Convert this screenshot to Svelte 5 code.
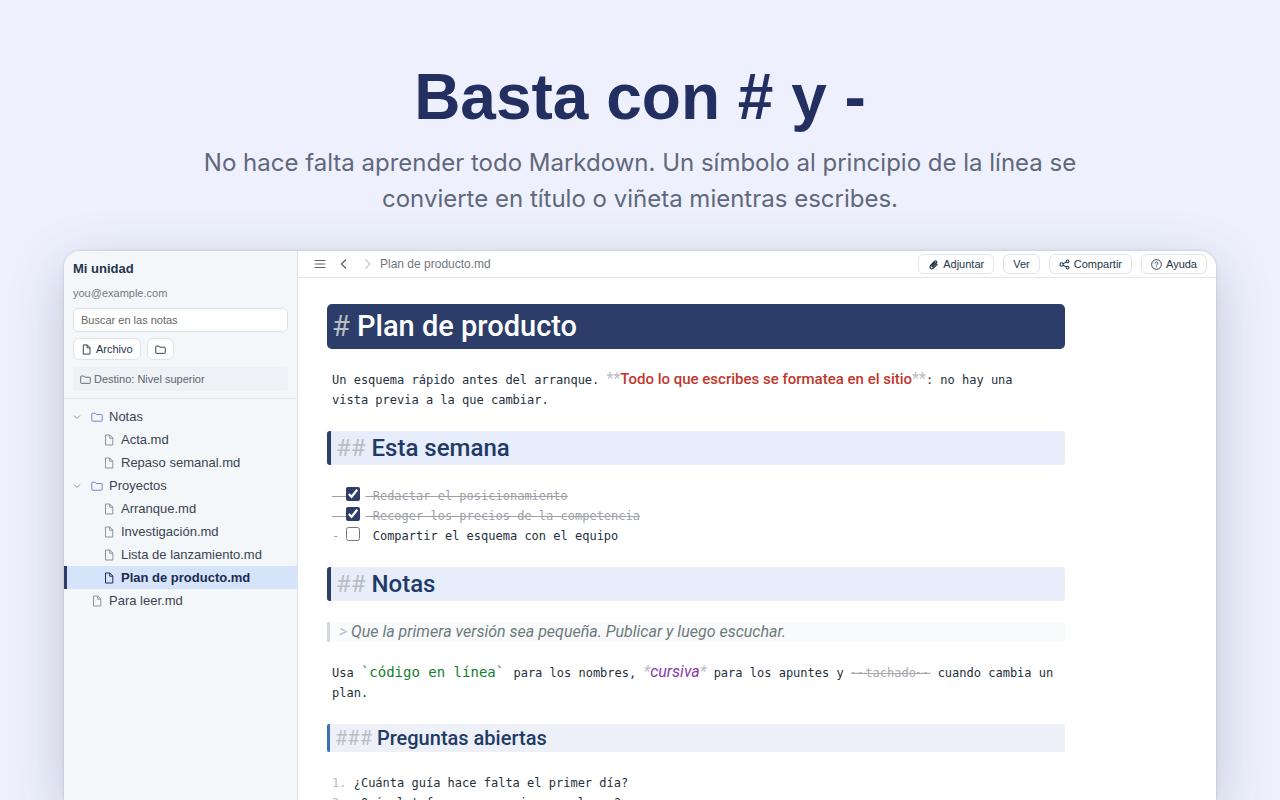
<script lang="ts">
  interface TreeItem {
    name: string;
    kind: "folder" | "file";
    depth: number;
  }

  const tree: TreeItem[] = [
    { name: "Notas", kind: "folder", depth: 0 },
    { name: "Acta.md", kind: "file", depth: 1 },
    { name: "Repaso semanal.md", kind: "file", depth: 1 },
    { name: "Proyectos", kind: "folder", depth: 0 },
    { name: "Arranque.md", kind: "file", depth: 1 },
    { name: "Investigación.md", kind: "file", depth: 1 },
    { name: "Lista de lanzamiento.md", kind: "file", depth: 1 },
    { name: "Plan de producto.md", kind: "file", depth: 1 },
    { name: "Para leer.md", kind: "file", depth: 0 },
  ];

  let current = $state("Plan de producto.md");
  let query = $state("");

  let tasks = $state([
    { text: "Redactar el posicionamiento", done: true },
    { text: "Recoger los precios de la competencia", done: true },
    { text: "Compartir el esquema con el equipo", done: false },
  ]);

  const questions = [
    "¿Cuánta guía hace falta el primer día?",
    "¿Qué plataformas van primero y luego?",
  ];
</script>

{#snippet fileIcon()}
  <svg class="icon file" viewBox="0 0 12 12" fill="none" stroke="currentColor" stroke-linejoin="round">
    <path d="M2.5 1h4.3L9.8 4v7H2.5z" />
    <path d="M6.7 1v3.2h3.1" />
  </svg>
{/snippet}

{#snippet folderIcon()}
  <svg class="icon folder" viewBox="0 0 12 12" fill="none" stroke="currentColor" stroke-linejoin="round">
    <path d="M.8 9.6V2.8q0-.6.6-.6h2.7l1.1 1.3h5.4q.6 0 .6.6v5.500q0 .6-.6.6H1.400q-.6 0-.6-.6z" />
  </svg>
{/snippet}

<main class="page">
  <header class="hero">
    <h1>Basta con # y -</h1>
    <p>
      No hace falta aprender todo Markdown. Un símbolo al principio de la línea se
      convierte en título o viñeta mientras escribes.
    </p>
  </header>

  <div class="window">
    <aside class="sidebar">
      <div class="drive">
        <h2>Mi unidad</h2>
        <div class="account">you@example.com</div>
        <input
          class="search"
          type="search"
          aria-label="Buscar en las notas"
          placeholder="Buscar en las notas"
          bind:value={query}
        />
        <div class="create">
          <button class="btn">{@render fileIcon()}Archivo</button>
          <button class="btn" aria-label="Carpeta">{@render folderIcon()}</button>
        </div>
        <div class="target">{@render folderIcon()}Destino: Nivel superior</div>
      </div>

      <nav class="tree">
        {#each tree as item}
          <button
            class="row"
            class:nested={item.depth === 1}
            class:loose={item.kind === "file" && item.depth === 0}
            class:is-folder={item.kind === "folder"}
            class:active={item.name === current}
            onclick={() => item.kind === "file" && (current = item.name)}
          >
            {#if item.kind === "folder"}
              <svg class="caret" viewBox="0 0 8 8" fill="none" stroke="currentColor">
                <path d="M1 2.5l3 3 3-3" />
              </svg>
              {@render folderIcon()}
            {:else}
              {@render fileIcon()}
            {/if}
            <span>{item.name}</span>
          </button>
        {/each}
      </nav>
    </aside>

    <section class="main">
      <div class="toolbar">
        <div class="tools">
          <button class="tool" aria-label="Menú">
            <svg viewBox="0 0 12 12" fill="none" stroke="currentColor" stroke-width="1.2">
              <path d="M.5 2.5h11M.5 6h11M.5 9.5h11" />
            </svg>
          </button>
          <button class="tool" aria-label="Atrás">
            <svg viewBox="0 0 12 12" fill="none" stroke="currentColor" stroke-width="1.3">
              <path d="M8 1.500L3.500 6 8 10.500" />
            </svg>
          </button>
          <button class="tool" aria-label="Adelante" disabled>
            <svg viewBox="0 0 12 12" fill="none" stroke="currentColor" stroke-width="1.2">
              <path d="M3.500 1.500L8 6l-4.500 4.500" />
            </svg>
          </button>
        </div>
        <span class="crumb">{current}</span>

        <div class="actions">
          <button class="btn">
            <svg class="icon" viewBox="0 0 12 12" fill="none" stroke="currentColor" stroke-width="1.3" stroke-linecap="round">
              <path d="M10 5.8L6.3 9.7c-1.3 1.4-3.2 1.2-3.9 0-.6-1-.2-2 .6-2.900l4-4.200c1.500-1.500 3.500.2 2.200 1.800L5.600 8.200c-.8.8-1.900-.1-1.200-1L7.600 3.800" />
            </svg>
            Adjuntar
          </button>
          <button class="btn">Ver</button>
          <button class="btn">
            <svg class="icon" viewBox="0 0 12 12" fill="none" stroke="currentColor" stroke-width="1.1">
              <circle cx="2.8" cy="6" r="1.8" />
              <circle cx="9.3" cy="2.7" r="1.5" />
              <circle cx="9.3" cy="9.3" r="1.5" />
              <path d="M4.4 5.2l3.500-1.800M4.400 6.800l3.500 1.800" />
            </svg>
            Compartir
          </button>
          <button class="btn">
            <svg class="icon" viewBox="0 0 12 12" fill="none" stroke="currentColor">
              <circle cx="6" cy="6" r="5.3" />
              <path d="M4.500 4.900c0-2 3-2 3-.1 0 1.100-1.500 1.100-1.500 2.300M6 8v1" />
            </svg>
            Ayuda
          </button>
        </div>
      </div>

      <article class="doc">
        <h1><span class="mark">#</span> Plan de producto</h1>

        <p>
          Un esquema rápido antes del arranque.
          <strong><span class="mark">**</span>Todo lo que escribes se formatea en el sitio<span class="mark">**</span></strong>: no hay una
          vista previa a la que cambiar.
        </p>

        <h2><span class="mark">##</span> Esta semana</h2>

        <ul class="tasks">
          {#each tasks as task}
            <li>
              <label class:done={task.done}>
                <span class="dash">-&nbsp;</span><input type="checkbox" bind:checked={task.done} /><span class="label">&nbsp;{task.text}</span>
              </label>
            </li>
          {/each}
        </ul>

        <h2><span class="mark">##</span> Notas</h2>

        <blockquote><span class="mark">&gt;</span> Que la primera versión sea pequeña. Publicar y luego escuchar.</blockquote>

        <p>
          Usa <code>`código en línea`</code> para los nombres,
          <em><span class="mark">*</span>cursiva<span class="mark">*</span></em> para los apuntes y
          <s>~~tachado~~</s> cuando cambia un plan.
        </p>

        <h3><span class="mark">###</span> Preguntas abiertas</h3>

        <div class="questions">
          {#each questions as question, i}
            <div><span class="mark">{i + 1}.</span> {question}</div>
          {/each}
        </div>
      </article>
    </section>
  </div>
</main>

<style>
  :global(body) {
    margin: 0;
    background: #eef1fd;
  }

  .page {
    display: flex;
    flex-direction: column;
    box-sizing: border-box;
    height: 100vh;
    padding: 59px 64px 0;
    overflow: hidden;
    background: #eef1fd;
    color: #24364b;
    font-family: "Liberation Sans", Arial, sans-serif;
  }

  .page * {
    box-sizing: border-box;
  }

  h1,
  h2,
  h3,
  p,
  ul,
  blockquote {
    margin: 0;
    padding: 0;
  }

  button,
  input {
    font-family: inherit;
  }

  .hero {
    text-align: center;
  }

  .hero h1 {
    color: #232f60;
    font-size: 64px;
    font-weight: 700;
    line-height: 76px;
  }

  .hero p {
    max-width: 920px;
    margin: 10px auto 0;
    color: #5f687c;
    font-family: Inter, sans-serif;
    font-size: 24px;
    line-height: 36px;
  }

  .window {
    display: flex;
    flex: 1;
    min-height: 0;
    margin-top: 34px;
    overflow: hidden;
    border-radius: 16px 16px 0 0;
    background: #fff;
    box-shadow:
      0 0 3px rgba(30, 40, 70, 0.2),
      0 16px 56px rgba(30, 40, 70, 0.22);
  }

  .sidebar {
    flex: none;
    width: 234px;
    border-right: 1px solid #dfe3e8;
    background: #f4f7fa;
  }

  .drive {
    padding: 9px 9px 7px;
    border-bottom: 1px solid #e3e6eb;
  }

  .drive h2 {
    font-size: 13px;
    font-weight: 700;
    line-height: 18px;
  }

  .account {
    margin: 6px 0;
    color: #717780;
    font-size: 11px;
    line-height: 18px;
  }

  .search {
    display: block;
    width: 100%;
    height: 24px;
    padding: 0 7px;
    border: 1px solid #dde1e6;
    border-radius: 5px;
    background: #fff;
    font-size: 11px;
  }

  .search::placeholder {
    color: #666;
  }

  .create {
    display: flex;
    gap: 6px;
    margin: 6px 0 7px;
  }

  .btn {
    display: flex;
    gap: 4px;
    align-items: center;
    height: 20px;
    padding: 0 9px;
    border: 1px solid #e0e4ea;
    border-radius: 6px;
    background: #fff;
    color: #24364b;
    font-size: 11px;
    white-space: nowrap;
  }

  .create .btn {
    height: 22px;
    padding: 0 7px;
  }

  .icon {
    flex: none;
    width: 11px;
    height: 11px;
  }

  .target {
    display: flex;
    gap: 3px;
    align-items: center;
    height: 24px;
    padding: 0 7px;
    border-radius: 4px;
    background: #eef1f5;
    color: #5c6570;
    font-size: 11px;
  }

  .tree {
    padding-top: 6px;
  }

  .row {
    display: flex;
    gap: 6px;
    align-items: center;
    width: 100%;
    height: 23px;
    padding: 0 9px;
    border: 0;
    border-left: 3px solid transparent;
    background: none;
    color: #3a4450;
    font-size: 13px;
    text-align: left;
    white-space: nowrap;
  }

  .row.is-folder {
    padding-left: 6px;
  }

  .row.nested {
    padding-left: 36px;
  }

  .row.loose {
    padding-left: 24px;
  }

  .row .icon {
    width: 12px;
    height: 12px;
  }

  .row .file {
    color: #8d929a;
  }

  .row .folder {
    color: #7487d8;
  }

  .caret {
    width: 8px;
    height: 8px;
    margin-right: 4px;
    color: #8d929a;
  }

  .row.active {
    border-left-color: #2c3d69;
    background: #d5e4fa;
    color: #1c2b4f;
    font-weight: 700;
  }

  .row.active .file {
    color: #1c2b4f;
  }

  .main {
    flex: 1;
    min-width: 0;
  }

  .toolbar {
    display: flex;
    align-items: center;
    height: 27px;
    padding: 0 9px 0 16px;
    border-bottom: 1px solid #e6e8eb;
  }

  .tools {
    display: flex;
    gap: 12px;
  }

  .tool {
    display: flex;
    padding: 0;
    border: 0;
    background: none;
    color: #5c6268;
  }

  .tool:disabled {
    color: #c3c7cc;
  }

  .tool svg {
    width: 12px;
    height: 12px;
  }

  .crumb {
    margin-left: 6px;
    color: #717780;
    font-size: 12px;
  }

  .actions {
    display: flex;
    gap: 9px;
    margin-left: auto;
  }

  .doc {
    display: flex;
    flex-direction: column;
    gap: 21px;
    max-width: 767px;
    padding: 26px 0 0 29px;
    color: #24303c;
    font-family: "DejaVu Sans Mono", monospace;
    font-size: 12px;
    line-height: 20px;
  }

  .doc h1,
  .doc h2,
  .doc h3,
  .doc blockquote,
  .doc strong,
  .doc em {
    font-family: Roboto, sans-serif;
  }

  .mark {
    color: #b9bdc4;
    font-weight: 400;
  }

  .doc h1 {
    padding: 0 5px;
    border-radius: 5px;
    background: #2c3d69;
    color: #fff;
    font-size: 29px;
    font-weight: 500;
    line-height: 45px;
  }

  .doc h2 {
    padding: 0 5px;
    border-left: 4px solid #2c3d69;
    border-radius: 3px;
    background: #e7edfb;
    color: #213a66;
    font-size: 24px;
    font-weight: 500;
    line-height: 34px;
  }

  .doc h3 {
    padding: 0 5px;
    border-left: 3px solid #3d70b2;
    border-radius: 2px;
    background: #edf1f7;
    color: #213a66;
    font-size: 20px;
    font-weight: 500;
    line-height: 28px;
  }

  .doc p,
  .questions,
  .tasks {
    padding: 0 10px 0 5px;
  }

  .doc strong,
  .doc em,
  .doc code {
    line-height: 1;
  }

  .doc strong {
    color: #c0372b;
    font-size: 15px;
    font-weight: 500;
  }

  .doc strong .mark {
    font-size: 16px;
  }

  .doc em {
    color: #8c3aa8;
    font-size: 16px;
  }

  .doc code {
    padding: 0 2px 0 0;
    color: #15802e;
    font-family: inherit;
    font-size: 14px;
  }

  .doc s {
    color: #a5a9ae;
  }

  .doc blockquote {
    padding: 0 9px;
    border-left: 3px solid #d3d7dc;
    background: #f8fafb;
    color: #6e7a7c;
    font-size: 16px;
    font-style: italic;
  }

  .tasks {
    list-style: none;
  }

  .tasks label {
    display: flex;
    align-items: center;
    height: 20px;
  }

  .tasks input {
    flex: none;
    width: 14px;
    height: 14px;
    margin: 0 5px 4px 0;
    accent-color: #2c3d69;
  }

  .dash,
  .done {
    color: #9da1a7;
  }

  .done .dash,
  .done .label {
    text-decoration: line-through;
  }
</style>
